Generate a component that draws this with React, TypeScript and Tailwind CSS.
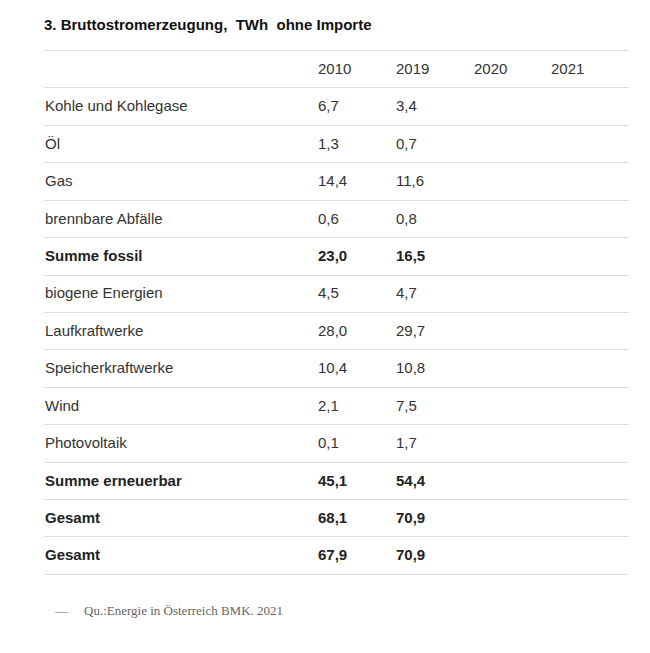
import React from "react";

type Row = { label: string; a: string; b: string; bold?: boolean };

const rows: Row[] = [
  { label: "Kohle und Kohlegase", a: "6,7", b: "3,4" },
  { label: "Öl", a: "1,3", b: "0,7" },
  { label: "Gas", a: "14,4", b: "11,6" },
  { label: "brennbare Abfälle", a: "0,6", b: "0,8" },
  { label: "Summe fossil", a: "23,0", b: "16,5", bold: true },
  { label: "biogene Energien", a: "4,5", b: "4,7" },
  { label: "Laufkraftwerke", a: "28,0", b: "29,7" },
  { label: "Speicherkraftwerke", a: "10,4", b: "10,8" },
  { label: "Wind", a: "2,1", b: "7,5" },
  { label: "Photovoltaik", a: "0,1", b: "1,7" },
  { label: "Summe erneuerbar", a: "45,1", b: "54,4", bold: true },
  { label: "Gesamt", a: "68,1", b: "70,9", bold: true },
  { label: "Gesamt", a: "67,9", b: "70,9", bold: true },
];

function TRow({ cells, bold }: { cells: string[]; bold?: boolean }) {
  return (
    <div
      className={`grid grid-cols-[273px_78px_78px_77px_78px] h-[37.43px] items-center border-b border-[#dddddd] text-[15px] ${
        bold ? "font-bold text-[#222]" : "text-[#333]"
      }`}
    >
      {cells.map((c, i) => (
        <div key={i} className="pl-px whitespace-nowrap">
          {c}
        </div>
      ))}
    </div>
  );
}

export default function App() {
  return (
    <div className="w-[650px] h-[653px] bg-white font-['Liberation_Sans',Arial,sans-serif]">
      <div className="pl-[44px] w-[629px]">
        <div className="pt-[16px] h-[50px]">
          <h3 className="text-[15px] leading-[18px] font-bold text-[#111] whitespace-pre">
            3. Bruttostromerzeugung,  TWh  ohne Importe
          </h3>
        </div>
        <div className="border-t border-[#dddddd]">
          <TRow cells={["", "2010", "2019", "2020", "2021"]} />
          {rows.map((r, i) => (
            <TRow key={i} cells={[r.label, r.a, r.b, "", ""]} bold={r.bold} />
          ))}
        </div>
        <div className="mt-[26px] flex items-center text-[13px] text-[#666] font-['Liberation_Serif',Georgia,serif]">
          <span className="ml-[11px] w-[29px]">—</span>
          <span>Qu.:Energie in Österreich BMK. 2021</span>
        </div>
      </div>
    </div>
  );
}
